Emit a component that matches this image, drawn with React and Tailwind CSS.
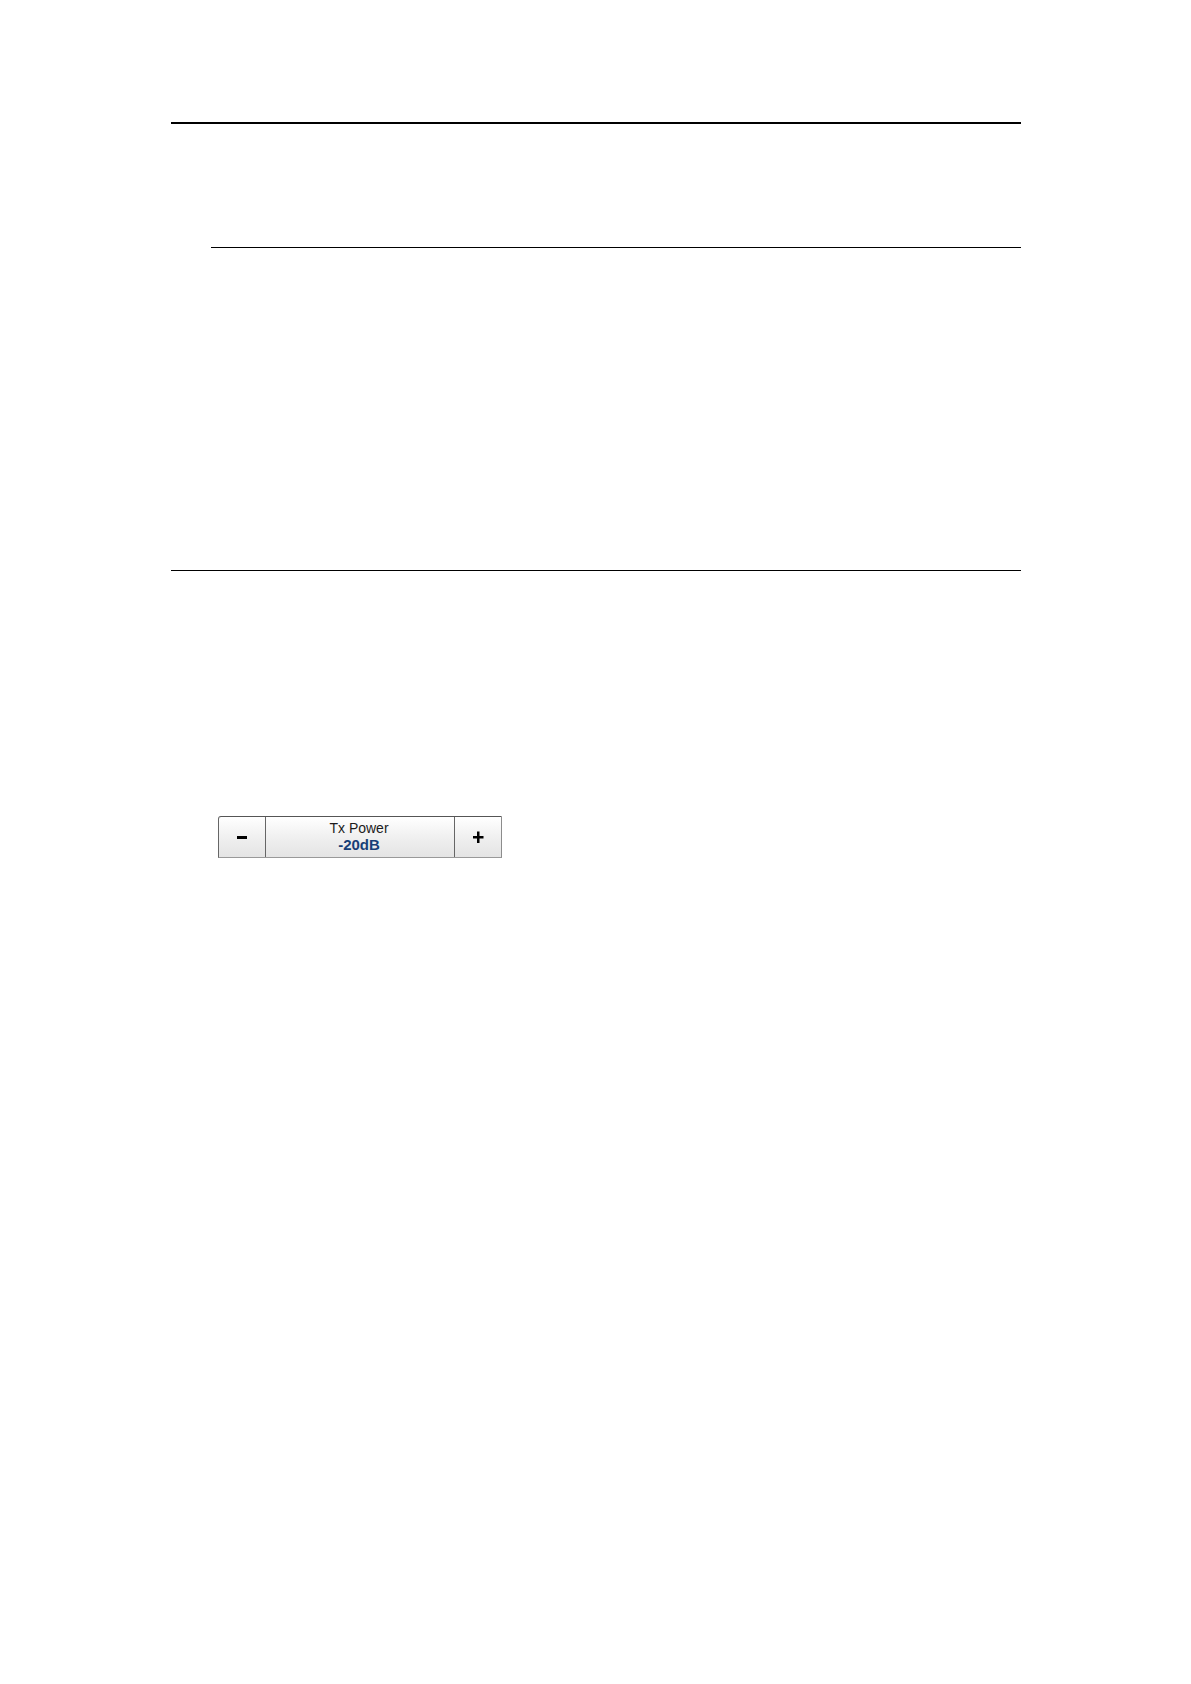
import React, { useState } from 'react';

const StepButton = ({ label, onClick, children }) => (
  <button
    type="button"
    aria-label={label}
    onClick={onClick}
    className="flex w-[46px] shrink-0 items-center justify-center text-black"
  >
    <svg viewBox="0 0 12 12" className="h-3 w-3" fill="currentColor">
      {children}
    </svg>
  </button>
);

const PowerStepper = () => {
  const [power, setPower] = useState(-20);

  return (
    <div className="flex h-[42px] w-[284px] rounded-tl-[3px] border border-t-[#555555] border-r-[#8c8c8c] border-b-[#999999] border-l-[#666666] bg-linear-to-b from-white via-[#f0f0f0] to-[#e4e4e4] font-['Liberation_Sans',Arial,sans-serif]">
      <StepButton label="Decrease Tx Power" onClick={() => setPower(power - 1)}>
        <rect x="1" y="5" width="10" height="3" />
      </StepButton>
      <div className="flex flex-1 flex-col items-center border-x border-[#666666] pt-[3px] pr-0.5">
        <span className="text-sm leading-4 text-[#1c1c1c]">Tx Power</span>
        <output className="text-[15px] leading-[17px] font-bold text-[#173f77]">{power}dB</output>
      </div>
      <StepButton label="Increase Tx Power" onClick={() => setPower(power + 1)}>
        <path d="M1 5h4V0.5h2.5V5H11.5v2.5h-4V12H5V7.5H1z" />
      </StepButton>
    </div>
  );
};

const App = () => (
  <main className="min-h-screen bg-white pt-[122px] pr-[170px] pl-[171px]">
    <hr className="border-t-2 border-black" />
    <hr className="mt-[123px] ml-10 border-t border-black" />
    <hr className="mt-[322px] border-t border-black" />
    <div className="mt-[245px] ml-[47px]">
      <PowerStepper />
    </div>
  </main>
);

export default App;
